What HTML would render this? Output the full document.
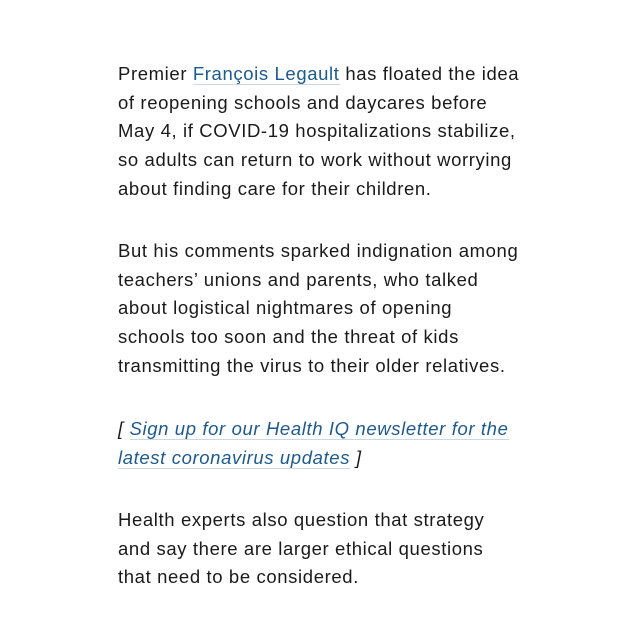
<!DOCTYPE html>
<html><head><meta charset="utf-8"><style>
body{margin:0;width:640px;height:640px;background:#fff;position:relative;overflow:hidden}
p{position:absolute;left:118px;margin:0;font-family:"Liberation Sans",sans-serif;font-size:18.5px;line-height:28.7px;color:#1a1a1a;white-space:nowrap;letter-spacing:0.62px}
a{color:#1d5a8e;text-decoration:none;border-bottom:1.5px solid #c8d8e6}
i a,i{font-style:italic}
</style></head><body>
<p style="top:60px">Premier <a>François Legault</a> has floated the idea<br>of reopening schools and daycares before<br>May 4, if COVID-19 hospitalizations stabilize,<br>so adults can return to work without worrying<br>about finding care for their children.</p>
<p style="top:237px">But his comments sparked indignation among<br>teachers’ unions and parents, who talked<br>about logistical nightmares of opening<br>schools too soon and the threat of kids<br>transmitting the virus to their older relatives.</p>
<p style="top:415px"><i>[ <a>Sign up for our Health IQ newsletter for the</a><br><a>latest coronavirus updates</a> ]</i></p>
<p style="top:506px">Health experts also question that strategy<br>and say there are larger ethical questions<br>that need to be considered.</p>
</body></html>
